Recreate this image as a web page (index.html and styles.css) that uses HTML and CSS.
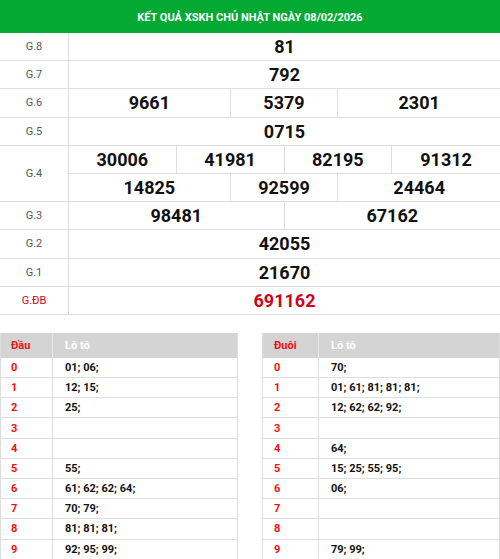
FILE: index.html
```html
<!DOCTYPE html>
<html lang="vi">
<head>
<meta charset="utf-8">
<title>KQXS Khánh Hòa</title>
<link rel="stylesheet" href="styles.css">
</head>
<body>
<div class="title">KẾT QUẢ XSKH CHỦ NHẬT NGÀY 08/02/2026</div>
<div class="results">
  <div class="row"><div class="label">G.8</div><div class="cells c1"><div class="num">81</div></div></div>
  <div class="row"><div class="label">G.7</div><div class="cells c1"><div class="num">792</div></div></div>
  <div class="row"><div class="label">G.6</div><div class="cells c3"><div class="num">9661</div><div class="num">5379</div><div class="num">2301</div></div></div>
  <div class="row"><div class="label">G.5</div><div class="cells c1"><div class="num">0715</div></div></div>
  <div class="row"><div class="label">G.4</div>
    <div class="stack">
      <div class="cells c4 sub"><div class="num">30006</div><div class="num">41981</div><div class="num">82195</div><div class="num">91312</div></div>
      <div class="cells c3"><div class="num">14825</div><div class="num">92599</div><div class="num">24464</div></div>
    </div>
  </div>
  <div class="row"><div class="label">G.3</div><div class="cells c2"><div class="num">98481</div><div class="num">67162</div></div></div>
  <div class="row"><div class="label">G.2</div><div class="cells c1"><div class="num">42055</div></div></div>
  <div class="row"><div class="label">G.1</div><div class="cells c1"><div class="num">21670</div></div></div>
  <div class="row"><div class="label red">G.ĐB</div><div class="cells c1"><div class="num red">691162</div></div></div>
</div>

<div class="loto">
  <div class="ltable dau">
    <div class="lrow head"><div class="k">Đầu</div><div class="v">Lô tô</div></div>
    <div class="lrow"><div class="k">0</div><div class="v">01; 06;</div></div>
    <div class="lrow"><div class="k">1</div><div class="v">12; 15;</div></div>
    <div class="lrow"><div class="k">2</div><div class="v">25;</div></div>
    <div class="lrow"><div class="k">3</div><div class="v"></div></div>
    <div class="lrow"><div class="k">4</div><div class="v"></div></div>
    <div class="lrow"><div class="k">5</div><div class="v">55;</div></div>
    <div class="lrow"><div class="k">6</div><div class="v">61; 62; 62; 64;</div></div>
    <div class="lrow"><div class="k">7</div><div class="v">70; 79;</div></div>
    <div class="lrow"><div class="k">8</div><div class="v">81; 81; 81;</div></div>
    <div class="lrow"><div class="k">9</div><div class="v">92; 95; 99;</div></div>
  </div>
  <div class="ltable duoi">
    <div class="lrow head"><div class="k">Đuôi</div><div class="v">Lô tô</div></div>
    <div class="lrow"><div class="k">0</div><div class="v">70;</div></div>
    <div class="lrow"><div class="k">1</div><div class="v">01; 61; 81; 81; 81;</div></div>
    <div class="lrow"><div class="k">2</div><div class="v">12; 62; 62; 92;</div></div>
    <div class="lrow"><div class="k">3</div><div class="v"></div></div>
    <div class="lrow"><div class="k">4</div><div class="v">64;</div></div>
    <div class="lrow"><div class="k">5</div><div class="v">15; 25; 55; 95;</div></div>
    <div class="lrow"><div class="k">6</div><div class="v">06;</div></div>
    <div class="lrow"><div class="k">7</div><div class="v"></div></div>
    <div class="lrow"><div class="k">8</div><div class="v"></div></div>
    <div class="lrow"><div class="k">9</div><div class="v">79; 99;</div></div>
  </div>
</div>
</body>
</html>
```

FILE: styles.css
```css
* { box-sizing: border-box; }
body {
  margin: 0;
  width: 500px;
  font-family: Roboto, "Liberation Sans", Arial, sans-serif;
  background: #fff;
  color: #111;
}
.title {
  height: 33px;
  background: #03a933;
  color: #fff;
  font-weight: 700;
  font-size: 11px;
  display: flex;
  align-items: center;
  justify-content: center;
  padding-top: 1px;
}
.results {
  display: flex;
  flex-direction: column;
}
.row {
  display: flex;
  border-bottom: 1px solid #ddd;
}
.label {
  width: 69px;
  flex: none;
  border-right: 1px solid #ddd;
  display: flex;
  align-items: center;
  justify-content: center;
  font-size: 11px;
  color: #555;
}
.label.red { color: #d0021b; }
.stack {
  flex: 1;
  display: flex;
  flex-direction: column;
}
.cells {
  flex: 1;
  display: grid;
  height: 27.2px;
}
.stack .cells { flex: none; }
.cells.sub { border-bottom: 1px solid #ddd; height: 28.2px; }
.c1 { grid-template-columns: 1fr; }
.c2 { grid-template-columns: 1fr 1fr; }
.c3 { grid-template-columns: 3fr 2fr 3fr; }
.c4 { grid-template-columns: 1fr 1fr 1fr 1fr; }
.num {
  display: flex;
  align-items: center;
  justify-content: center;
  font-weight: 700;
  font-size: 18px;
  color: #111;
  border-right: 1px solid #ddd;
}
.num:last-child { border-right: none; }
.num.red { color: #d0021b; }

.loto {
  margin-top: 18px;
  display: flex;
  justify-content: space-between;
}
.ltable {
  width: 238px;
  border: 1px solid #ddd;
  border-top: none;
}
.lrow {
  display: flex;
  height: 20.2px;
  border-bottom: 1px solid #ddd;
  font-size: 11px;
  font-weight: 700;
}
.lrow.head {
  height: 25px;
  background: #d4d4d4;
  border-bottom: none;
}
.k {
  flex: none;
  color: #ee1111;
  border-right: 1px solid #ddd;
  display: flex;
  align-items: center;
  padding-left: 10px;
}
.dau .k { width: 52px; }
.duoi .k { width: 56px; padding-left: 11px; }
.head .k { border-right: 1px solid #e8e8e8; }
.v {
  flex: 1;
  display: flex;
  align-items: center;
  padding-left: 12px;
  color: #111;
}
.head .v { color: #fff; }
```
